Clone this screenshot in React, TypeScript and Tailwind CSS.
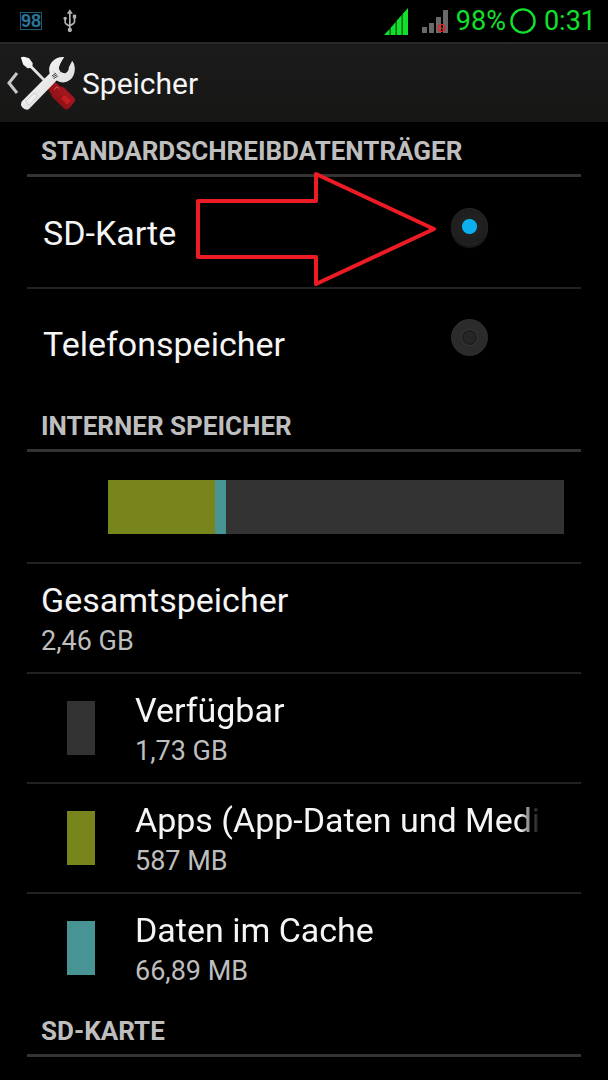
import { useState } from "react";

const targets = [
  { id: "sd", label: "SD-Karte" },
  { id: "phone", label: "Telefonspeicher" },
];

const usage = [
  { title: "Verfügbar", size: "1,73 GB", color: "bg-[#333333]" },
  { title: "Apps (App-Daten und Medi", size: "587 MB", color: "bg-[#78841c]" },
  { title: "Daten im Cache", size: "66,89 MB", color: "bg-[#489494]" },
];

function UsbIcon() {
  return (
    <svg viewBox="190 28 44 72" className="h-6 w-[15px]" fill="none" stroke="#b4b4b4" strokeWidth="5">
      <path d="M213 38V92M199 58V68Q199 72 203 74L213 80M227 52V66Q227 70 223 72L213 78" />
      <path d="M213 29L222 42H204Z" fill="#b4b4b4" stroke="none" />
      <circle cx="199" cy="56" r="5" fill="#b4b4b4" stroke="none" />
      <path d="M222 45H232V56H222Z" fill="#b4b4b4" stroke="none" />
      <circle cx="213" cy="91" r="6.5" fill="#b4b4b4" stroke="none" />
    </svg>
  );
}

function SignalFull() {
  return (
    <svg viewBox="0 0 24 27" className="h-[27px] w-6" fill="#12e02c">
      <path d="M0 27L5.7 21V27ZM6.5 20L11.7 14V27H6.5ZM12.5 13L17.7 7V27H12.5ZM18.5 6L24 0V27H18.5Z" />
    </svg>
  );
}

function SignalBlocked() {
  return (
    <svg viewBox="0 0 26 24" className="h-6 w-[26px]">
      <path d="M0 18H5V24H0ZM7 14H12V24H7ZM14 8H19V24H14ZM21 1H26V24H21Z" fill="#6a6a6a" />
      <g fill="none" stroke="#e02626" strokeWidth="1.3">
        <circle cx="19.5" cy="19" r="3.4" />
        <path d="M17 17L22 21" />
      </g>
    </svg>
  );
}

function ToolsIcon() {
  return (
    <svg viewBox="60 165 168 166" className="h-[55px] w-14">
      <defs>
        <linearGradient id="steel" x1="0" y1="0" x2="1" y2="1">
          <stop offset="0" stopColor="#ffffff" />
          <stop offset="1" stopColor="#d2d2d2" />
        </linearGradient>
        <linearGradient id="grip" x1="0" y1="1" x2="1" y2="0">
          <stop offset="0" stopColor="#6e0d12" />
          <stop offset="0.6" stopColor="#a5151c" />
          <stop offset="1" stopColor="#7c1016" />
        </linearGradient>
      </defs>
      <path d="M62 169L71 167L87 172L98 187L97 195L136 235L130 241L91 201L82 202L69 191Z" fill="url(#steel)" />
      <path d="M140 256L160 240L180 256L192 260L223 290Q228 296 224 303L207 324Q200 329 193 324L158 290Z" fill="url(#grip)" />
      <path d="M184 293L193 284L212 300L202 311Z" fill="#d6222a" />
      <path d="M187 293L204 307M191 289L208 303" stroke="#8a1016" strokeWidth="2" />
      <path d="M163 266L171 258L177 263" stroke="#dd5a5e" strokeWidth="3" fill="none" />
      <path
        d="M193 168Q170 166 155 184Q144 199 149 218L64 303Q60 312 66 320Q75 330 86 326L170 239Q192 252 211 237Q225 225 225 202Q225 188 217 179L207 199Q207 212 196 217Q181 218 177 203Q177 192 193 168Z"
        fill="url(#steel)"
      />
      <path d="M77 301L104 276L113 286L86 314Z" fill="#eeeeee" stroke="#bcbcbc" strokeWidth="2" />
      <path d="M159 211L176 229M176 213L181 218" stroke="#aaaaaa" strokeWidth="2" />
      <path d="M156 225L168 217M158 229L171 221M161 233L173 226" stroke="#444444" strokeWidth="3" />
    </svg>
  );
}

function StatusBar() {
  return (
    <div className="flex h-[42px] items-center justify-between pl-5 pr-3">
      <div className="flex items-center gap-5">
        <span className="flex h-[18px] items-center border border-[#1c5c7a] font-['Liberation_Sans',sans-serif] text-[18px] font-bold leading-none text-[#2a7598]">
          98
        </span>
        <UsbIcon />
      </div>
      <div className="flex items-center text-[27px] leading-8 text-[#12e02c]">
        <SignalFull />
        <span className="ml-3.5 mr-2">
          <SignalBlocked />
        </span>
        <span>98%</span>
        <svg viewBox="0 0 26 26" className="ml-1 mr-2 h-[26px] w-[26px]" fill="none" stroke="currentColor" strokeWidth="2.4">
          <circle cx="13" cy="13" r="11.6" />
        </svg>
        <span>0:31</span>
      </div>
    </div>
  );
}

function SectionTitle({ children }: { children: string }) {
  return (
    <h2 className="border-b-3 border-[#333333] px-3.5 pb-[7px] pt-[13px] text-[26px] font-bold leading-8 text-[#bebebe]">
      {children}
    </h2>
  );
}

function Arrow() {
  return (
    <svg
      viewBox="0 0 242 116"
      className="pointer-events-none absolute -top-1.5 left-[168px] h-[116px] w-[242px]"
      fill="none"
      stroke="#ed1c24"
      strokeWidth="4"
      strokeLinejoin="round"
    >
      <path d="M3 30H121V3L239 58L121 113V86H3Z" />
    </svg>
  );
}

export default function App() {
  const [target, setTarget] = useState("sd");

  return (
    <div className="min-h-screen bg-black font-[Roboto,sans-serif] text-[#f5f5f5]">
      <StatusBar />

      <header className="flex h-20 items-center border-t-2 border-[#292929] bg-linear-to-b from-[#1b1b1b] to-[#171716] pl-1.5">
        <button type="button" aria-label="Zurück" className="flex items-center">
          <svg viewBox="0 0 14 22" className="h-[22px] w-3.5" fill="none" stroke="#c8c8c8" strokeWidth="3">
            <path d="M11 1L3 11L11 21" />
          </svg>
          <ToolsIcon />
        </button>
        <h1 className="ml-1.5 pt-0.5 text-[30px] leading-9">Speicher</h1>
      </header>

      <main className="px-[27px]">
        <SectionTitle>STANDARDSCHREIBDATENTRÄGER</SectionTitle>
        <div role="radiogroup" aria-label="Standardschreibdatenträger" className="relative">
          {targets.map(({ id, label }) => (
            <div
              key={id}
              className="flex h-[110px] items-center justify-between border-[#222222] pl-4 pr-[93px] not-first:border-t-2"
            >
              <label htmlFor={id} className="pt-0.5 text-[34px] leading-10">
                {label}
              </label>
              <input
                id={id}
                type="radio"
                name="target"
                checked={target === id}
                onChange={() => setTarget(id)}
                className="mb-3 size-[37px] appearance-none rounded-full border border-[#303030] bg-[radial-gradient(circle,#262626_0_5px,#1c1c1c_7px,#363636_8px,#2b2b2b_9px)] checked:border-[#2a2a2a] checked:bg-[radial-gradient(circle,#0caeee_0_7px,#222222_8px,#1a1a1a)] checked:shadow-[0_3px_1px_#1c1c1c]"
              />
            </div>
          ))}
          <Arrow />
        </div>

        <SectionTitle>INTERNER SPEICHER</SectionTitle>
        <div>
          <div className="flex h-[110px] items-center pl-[81px] pr-[17px]">
            <div className="flex h-[54px] flex-1 bg-[#333333]">
              <div className="bg-[#78841c]" style={{ width: "23.4%" }} />
              <div className="bg-[#489494]" style={{ width: "2.5%" }} />
            </div>
          </div>
          <div className="flex h-[110px] flex-col justify-center border-t-2 border-[#222222] px-3.5 pt-1.5">
            <p className="text-[34px] leading-10">Gesamtspeicher</p>
            <p className="text-[27px] leading-[42px] text-[#bebebe]">2,46 GB</p>
          </div>
          {usage.map(({ title, size, color }) => (
            <div key={title} className="flex h-[110px] items-center border-t-2 border-[#222222] pl-10 pr-[31px]">
              <div className={`h-[54px] w-7 shrink-0 ${color}`} />
              <div className="ml-10 min-w-0 flex-1 pt-1.5">
                <p className="overflow-hidden whitespace-nowrap text-[34px] leading-10 mask-r-from-[calc(100%-30px)] mask-r-to-[calc(100%-10px)]">
                  {title}
                </p>
                <p className="text-[27px] leading-[42px] text-[#bebebe]">{size}</p>
              </div>
            </div>
          ))}
        </div>

        <SectionTitle>SD-KARTE</SectionTitle>
      </main>
    </div>
  );
}
